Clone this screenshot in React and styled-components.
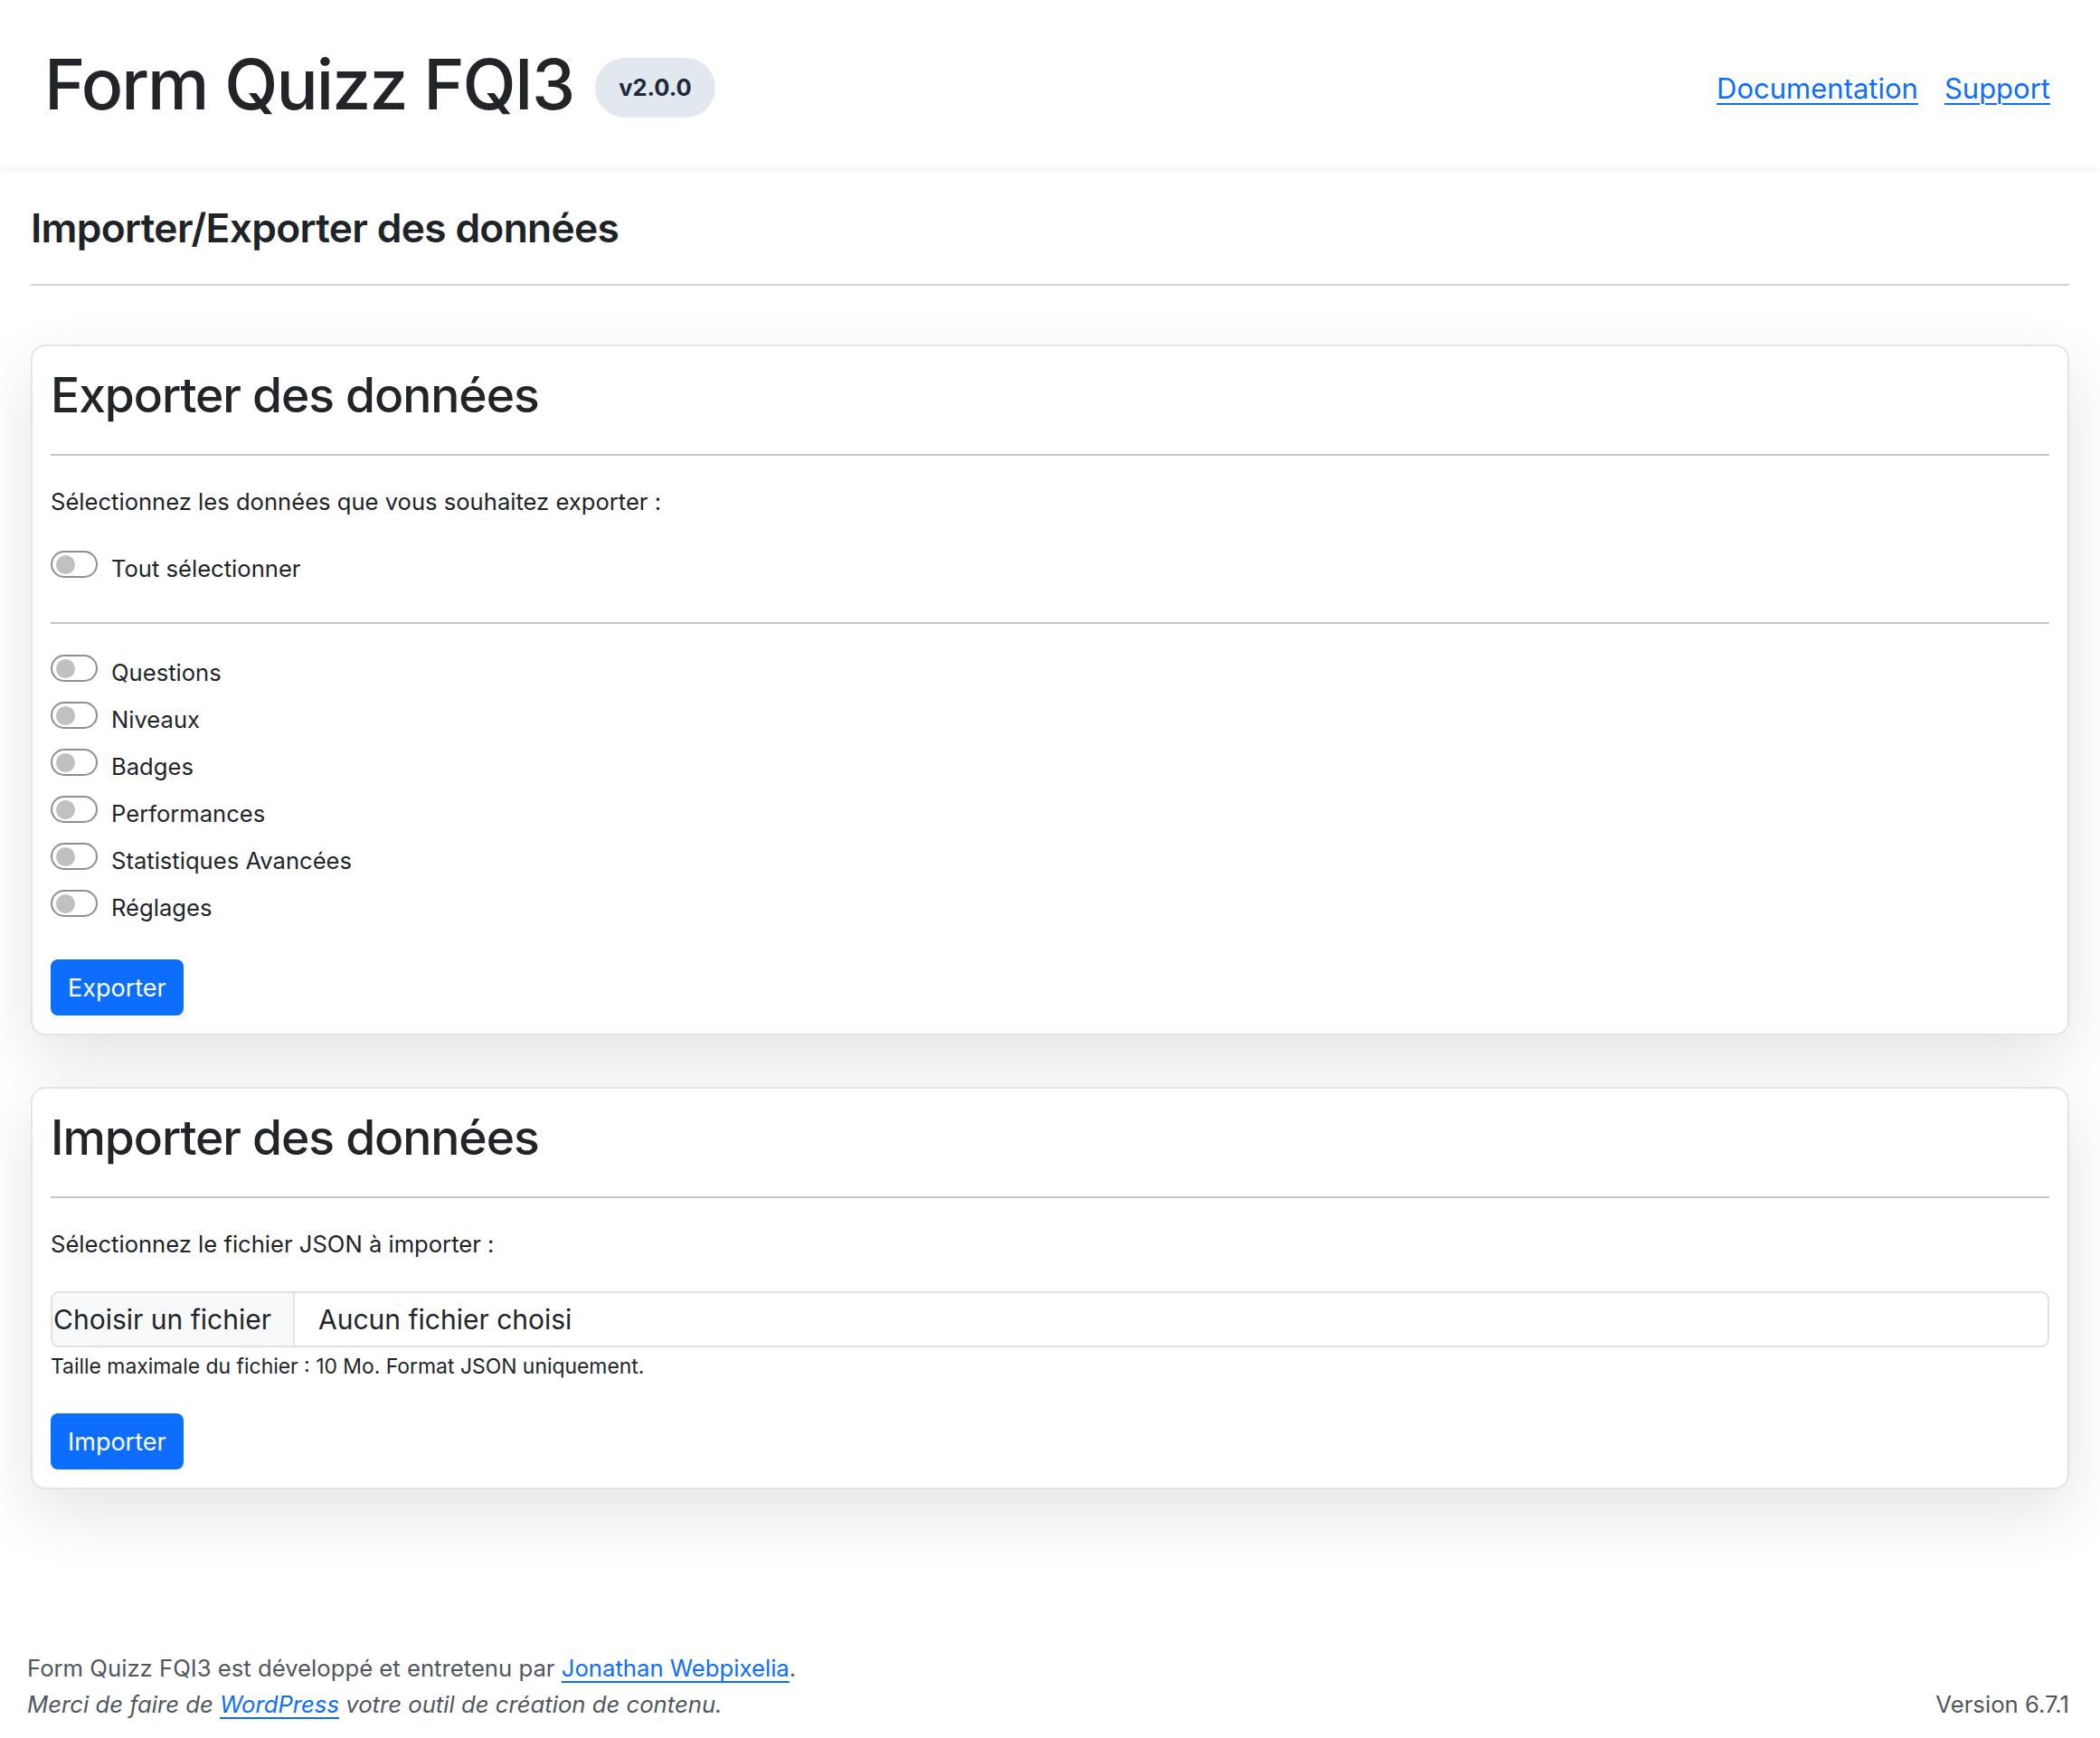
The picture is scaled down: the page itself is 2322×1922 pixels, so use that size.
import React from "react";
import styled, { createGlobalStyle } from "styled-components";

const GlobalStyle = createGlobalStyle`
  html, body {
    margin: 0;
    padding: 0;
    background: #ffffff;
  }
  body {
    font-family: Inter, "Noto Sans", "Liberation Sans", sans-serif;
    color: #212529;
  }
  * {
    box-sizing: border-box;
  }
`;

const Page = styled.div`
  min-height: 100vh;
  display: flex;
  flex-direction: column;
`;

const TopBar = styled.header`
  height: 185px;
  display: flex;
  align-items: center;
  justify-content: space-between;
  padding: 0 55px 0 49px;
  background: #ffffff;
  box-shadow: 0 2px 8px rgba(0, 0, 0, 0.06);
`;

const Brand = styled.div`
  display: flex;
  align-items: center;
  gap: 24px;
`;

const AppTitle = styled.h1`
  margin: 0;
  font-size: 77px;
  font-weight: 500;
  letter-spacing: -0.025em;
  color: #212529;
`;

const VersionBadge = styled.span`
  display: inline-flex;
  align-items: center;
  height: 66px;
  margin-top: 8px;
  padding: 0 26px;
  border-radius: 33px;
  background: #e2e8f0;
  color: #1e293b;
  font-size: 25.5px;
  font-weight: 700;
`;

const Nav = styled.nav`
  display: flex;
  gap: 29px;
  margin-top: 10px;
`;

const Link = styled.a`
  color: #0d6efd;
  text-decoration: underline;
  text-decoration-thickness: 2px;
  text-underline-offset: 5px;
  font-size: ${(p) => p.$size || "inherit"};
  font-style: inherit;
`;

const Main = styled.main`
  padding: 0 34px;
`;

const PageTitle = styled.h2`
  margin: 41px 0 0;
  font-size: 44.3px;
  line-height: 52px;
  font-weight: 600;
  letter-spacing: -0.015em;
  color: #1d2327;
`;

const Rule = styled.hr`
  margin: ${(p) => p.$margin || "0"};
  border: 0;
  height: 2px;
  background: ${(p) => p.$color || "#c8c8c8"};
`;

const Card = styled.section`
  margin-top: ${(p) => p.$top || "0"};
  padding: 20px;
  background: #ffffff;
  border: 2px solid #e4e4e4;
  border-radius: 16px;
  box-shadow: 0 26px 70px rgba(0, 0, 0, 0.11);
`;

const CardTitle = styled.h3`
  margin: 4px 0 0;
  font-size: 53.4px;
  line-height: 60px;
  font-weight: 500;
  letter-spacing: -0.02em;
  color: #212529;
`;

const Text = styled.p`
  margin: ${(p) => p.$margin || "0"};
  font-size: 25.6px;
  line-height: 36px;
  color: #1d2327;
`;

const OptionList = styled.div`
  display: flex;
  flex-direction: column;
  gap: 14px;
`;

const OptionRow = styled.label`
  display: flex;
  align-items: flex-start;
  gap: 15px;
  margin-top: ${(p) => p.$top || "0"};
  cursor: pointer;
`;

const Switch = styled.span`
  flex: none;
  display: flex;
  align-items: center;
  width: 52px;
  height: 30px;
  padding-left: 4px;
  border: 2px solid #8f8f8f;
  border-radius: 15px;
  background: #ffffff;
`;

const Knob = styled.span`
  width: 21px;
  height: 21px;
  border-radius: 50%;
  background: #c0c0c0;
`;

const OptionLabel = styled.span`
  margin-top: 2px;
  font-size: 25.6px;
  line-height: 36px;
  color: #212529;
`;

const PrimaryButton = styled.button`
  display: inline-flex;
  align-items: center;
  height: 62px;
  padding: 0 19px;
  margin-top: ${(p) => p.$top || "0"};
  border: 0;
  border-radius: 8px;
  background: #0d6efd;
  color: #ffffff;
  font-family: inherit;
  font-size: 27px;
  cursor: pointer;
`;

const FileField = styled.div`
  display: flex;
  align-items: stretch;
  height: 62px;
  margin-top: 34px;
  border: 2px solid #dee2e6;
  border-radius: 9px;
  overflow: hidden;
  font-size: 30px;
  color: #212529;
`;

const FileButton = styled.span`
  display: flex;
  align-items: center;
  padding: 0 24px 0 1px;
  background: #f8f9fa;
  border-right: 2px solid #dee2e6;
`;

const FileName = styled.span`
  display: flex;
  align-items: center;
  padding-left: 26px;
`;

const HelpText = styled.p`
  margin: 6px 0 0;
  font-size: 22.9px;
  line-height: 30px;
  color: #212529;
`;

const Footer = styled.footer`
  margin-top: auto;
  display: flex;
  justify-content: space-between;
  align-items: flex-end;
  padding: 140px 34px 17px 30px;
  font-size: 25.7px;
  line-height: 40px;
  color: #50575e;
`;

const FooterLine = styled.p`
  margin: 0;
  font-style: ${(p) => (p.$italic ? "italic" : "normal")};
`;

const options = [
  "Questions",
  "Niveaux",
  "Badges",
  "Performances",
  "Statistiques Avancées",
  "Réglages",
];

function Toggle() {
  return (
    <Switch>
      <Knob />
    </Switch>
  );
}

export default function App() {
  return (
    <Page>
      <GlobalStyle />
      <TopBar>
        <Brand>
          <AppTitle>Form Quizz FQI3</AppTitle>
          <VersionBadge>v2.0.0</VersionBadge>
        </Brand>
        <Nav>
          <Link href="#" $size="31px">
            Documentation
          </Link>
          <Link href="#" $size="31px">
            Support
          </Link>
        </Nav>
      </TopBar>

      <Main>
        <PageTitle>Importer/Exporter des données</PageTitle>
        <Rule $margin="36px 0 0" $color="#d8d2d2" />

        <Card $top="65px">
          <CardTitle>Exporter des données</CardTitle>
          <Rule $margin="35px 0 0" />
          <Text $margin="33px 0 0">
            Sélectionnez les données que vous souhaitez exporter :
          </Text>
          <OptionRow $top="36px">
            <Toggle />
            <OptionLabel>Tout sélectionner</OptionLabel>
          </OptionRow>
          <Rule $margin="41px 0 34px" />
          <OptionList>
            {options.map((name) => (
              <OptionRow key={name}>
                <Toggle />
                <OptionLabel>{name}</OptionLabel>
              </OptionRow>
            ))}
          </OptionList>
          <PrimaryButton $top="39px">Exporter</PrimaryButton>
        </Card>

        <Card $top="57px">
          <CardTitle>Importer des données</CardTitle>
          <Rule $margin="35px 0 0" />
          <Text $margin="33px 0 0">Sélectionnez le fichier JSON à importer :</Text>
          <FileField>
            <FileButton>Choisir un fichier</FileButton>
            <FileName>Aucun fichier choisi</FileName>
          </FileField>
          <HelpText>Taille maximale du fichier : 10 Mo. Format JSON uniquement.</HelpText>
          <PrimaryButton $top="37px">Importer</PrimaryButton>
        </Card>
      </Main>

      <Footer>
        <div>
          <FooterLine>
            Form Quizz FQI3 est développé et entretenu par{" "}
            <Link href="#">Jonathan Webpixelia</Link>.
          </FooterLine>
          <FooterLine $italic>
            Merci de faire de <Link href="#">WordPress</Link> votre outil de
            création de contenu.
          </FooterLine>
        </div>
        <FooterLine>Version 6.7.1</FooterLine>
      </Footer>
    </Page>
  );
}
